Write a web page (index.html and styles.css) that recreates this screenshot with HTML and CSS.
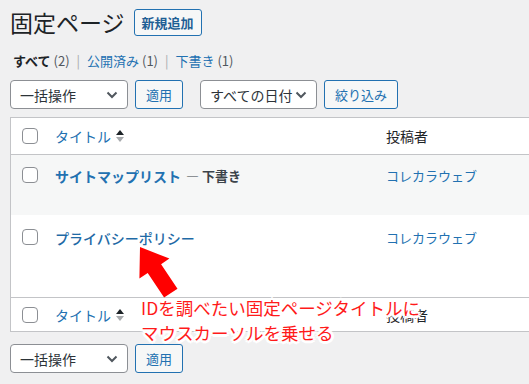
FILE: index.html
```html
<!DOCTYPE html>
<html lang="ja">
<head>
    <meta charset="UTF-8">
    <title>固定ページ</title>
    <link rel="stylesheet" href="styles.css">
</head>
<body>
    <div class="wrap">
        <div class="page-head">
            <h1 class="page-title">固定ページ</h1>
            <a class="btn-add">新規追加</a>
        </div>

        <ul class="subsub">
            <li class="current">すべて <span class="count">(2)</span></li>
            <li class="sep">|</li>
            <li><a>公開済み</a> <span class="count">(1)</span></li>
            <li class="sep">|</li>
            <li><a>下書き</a> <span class="count">(1)</span></li>
        </ul>

        <div class="tablenav">
            <div class="select">一括操作<svg class="chev" viewBox="0 0 12 8"><path d="M1.5 1.5 L6 6 L10.5 1.5"/></svg></div>
            <button class="btn">適用</button>
            <div class="select select-date">すべての日付<svg class="chev" viewBox="0 0 12 8"><path d="M1.5 1.5 L6 6 L10.5 1.5"/></svg></div>
            <button class="btn">絞り込み</button>
        </div>

        <div class="list">
            <div class="row row-head">
                <span class="check"></span>
                <span class="col-title"><a>タイトル</a><span class="sort"><i class="up"></i><i class="down"></i></span></span>
                <span class="col-author">投稿者</span>
            </div>
            <div class="row row-alt">
                <span class="check"></span>
                <span class="col-title"><a class="row-title">サイトマップリスト</a><span class="state">— 下書き</span></span>
                <span class="col-author"><a>コレカラウェブ</a></span>
            </div>
            <div class="row row-tall">
                <span class="check"></span>
                <span class="col-title"><a class="row-title hover">プライバシーポリシー</a></span>
                <span class="col-author"><a>コレカラウェブ</a></span>
            </div>
            <div class="row row-foot">
                <span class="check"></span>
                <span class="col-title"><a>タイトル</a><span class="sort"><i class="up"></i><i class="down"></i></span></span>
                <span class="col-author">投稿者</span>
            </div>
        </div>

        <div class="tablenav tablenav-bottom">
            <div class="select">一括操作<svg class="chev" viewBox="0 0 12 8"><path d="M1.5 1.5 L6 6 L10.5 1.5"/></svg></div>
            <button class="btn">適用</button>
        </div>
    </div>

    <!-- annotation laid over the screenshot -->
    <svg class="note-arrow" viewBox="0 0 60 65" width="60" height="65">
        <polygon points="10,6 39.4,17.6 31.1,23.2 47.5,47.8 34.1,56.6 17.7,32 9.4,37.6"/>
    </svg>
    <div class="note">
        <span>IDを調べたい固定ページタイトルに</span><br>
        <span>マウスカーソルを乗せる</span>
    </div>
</body>
</html>
```

FILE: styles.css
```css
html, body {
    margin: 0;
    padding: 0;
    width: 529px;
    height: 384px;
    overflow: hidden;
}
body {
    background-color: #f0f0f1;
    font-family: "Noto Sans CJK JP", "Noto Sans", sans-serif;
    color: #1d2327;
    font-size: 13px;
    position: relative;
}
a {
    color: #2271b1;
    text-decoration: none;
}
.wrap {
    padding: 9px 0 0 10px;
    width: 640px;
}
.page-head {
    display: flex;
    align-items: center;
    height: 27px;
}
.page-title {
    margin: 0;
    font-size: 23px;
    font-weight: 400;
    line-height: 27px;
    color: #1d2327;
}
.btn-add {
    margin-left: 9px;
    height: 25px;
    padding: 0 7px;
    display: flex;
    align-items: center;
    border: 1px solid #2271b1;
    border-radius: 3px;
    background-color: #f6f7f7;
    color: #1f5f95;
    font-size: 13px;
    font-weight: 700;
}
.subsub {
    list-style: none;
    margin: 15px 0 0 3px;
    padding: 0;
    display: flex;
    gap: 5px;
    line-height: 20px;
    font-size: 13px;
    color: #50575e;
}
.subsub .current {
    color: #1d2327;
    font-weight: 700;
}
.subsub .count {
    color: #50575e;
    font-weight: 400;
}
.subsub .sep {
    color: #a7aaad;
    padding: 0 2px;
}
.tablenav {
    display: flex;
    align-items: center;
    margin-top: 9px;
    height: 29px;
}
.select {
    box-sizing: border-box;
    width: 118px;
    height: 29px;
    border: 1px solid #8c8f94;
    border-radius: 4px;
    background-color: #fff;
    display: flex;
    align-items: center;
    justify-content: space-between;
    padding: 0 9px 0 9px;
    font-size: 14px;
    color: #2c3338;
}
.select-date {
    margin-left: 17px;
    width: 117px;
}
.chev {
    width: 12px;
    height: 8px;
    fill: none;
    stroke: #50575e;
    stroke-width: 2;
}
.btn {
    box-sizing: border-box;
    height: 29px;
    margin-left: 7px;
    padding: 0 10px;
    border: 1px solid #2271b1;
    border-radius: 3px;
    background-color: #f6f7f7;
    color: #2271b1;
    font-family: inherit;
    font-size: 13px;
}
.list {
    margin-top: 8px;
    border: 1px solid #c3c4c7;
    background-color: #fff;
}
.row {
    display: grid;
    grid-template-columns: 44px 331px 1fr;
    font-size: 13px;
    line-height: 20px;
}
.row-head {
    height: 36px;
    align-items: center;
    border-bottom: 1px solid #c3c4c7;
    font-size: 14px;
}
.row-foot {
    height: 33px;
    align-items: center;
    border-top: 1px solid #c3c4c7;
    font-size: 14px;
}
.row-alt {
    height: 60px;
    background-color: #f6f7f7;
    align-items: start;
}
.row-tall {
    height: 82px;
    align-items: start;
}
.row-alt > span {
    margin-top: 11px;
}
.row-tall > span {
    margin-top: 13px;
}
.check {
    box-sizing: border-box;
    width: 16px;
    height: 16px;
    margin-left: 11px;
    border: 1px solid #8c8f94;
    border-radius: 4px;
    background-color: #fff;
}
.row-alt > .check {
    margin-top: 12px;
}
.row-tall > .check {
    margin-top: 14px;
}
.col-title {
    display: flex;
    align-items: center;
}
.col-author a {
    font-size: 13px;
}
.row-title {
    font-size: 14px;
    font-weight: 700;
}
.row-title.hover {
    font-weight: 500;
    color: #1f6aa6;
}
.state {
    margin-left: 5px;
    font-weight: 700;
    color: #3c434a;
}
.sort {
    display: inline-flex;
    flex-direction: column;
    gap: 2px;
    margin-left: 5px;
}
.sort i {
    width: 0;
    height: 0;
    border-left: 4px solid transparent;
    border-right: 4px solid transparent;
}
.sort .up {
    border-bottom: 5px solid #1d2327;
}
.sort .down {
    border-top: 5px solid #a7aaad;
}
.tablenav-bottom {
    margin-top: 12px;
}
.note-arrow {
    position: absolute;
    left: 130px;
    top: 241px;
}
.note-arrow polygon {
    fill: #ff0000;
}
.note {
    position: absolute;
    left: 139px;
    top: 295px;
    font-size: 17.5px;
    line-height: 25px;
    color: #ff1a1a;
    white-space: nowrap;
}
.note span {
    padding: 0 2px;
    text-shadow: 2px 0 0 #fff, -2px 0 0 #fff, 0 2px 0 #fff, 0 -2px 0 #fff,
        2px 2px 0 #fff, -2px 2px 0 #fff, 2px -2px 0 #fff, -2px -2px 0 #fff,
        3px 0 0 #fff, -3px 0 0 #fff, 0 3px 0 #fff, 0 -3px 0 #fff;
}
```
